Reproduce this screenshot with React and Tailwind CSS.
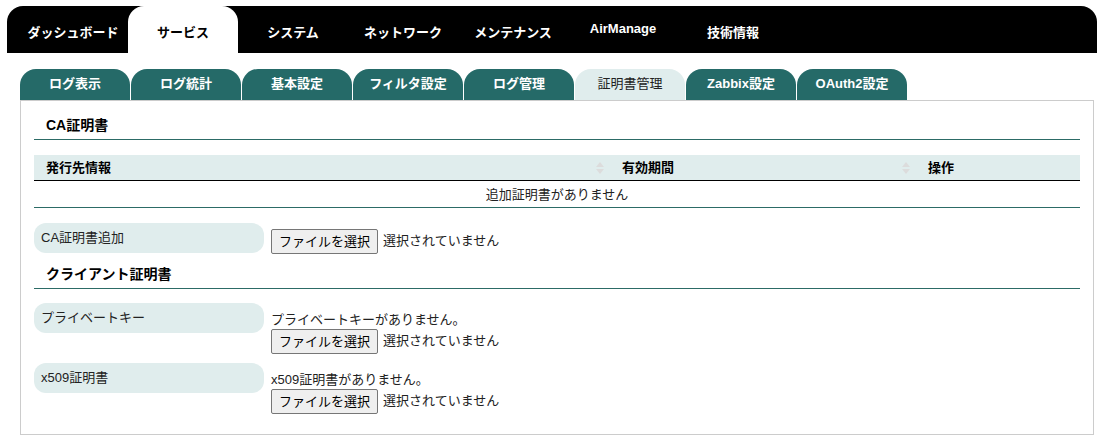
import React from 'react';

const NAV = ['ダッシュボード', 'サービス', 'システム', 'ネットワーク', 'メンテナンス', 'AirManage', '技術情報'];
const TABS = ['ログ表示', 'ログ統計', '基本設定', 'フィルタ設定', 'ログ管理', '証明書管理', 'Zabbix設定', 'OAuth2設定'];

const SortIcon = () => (
  <svg width="10" height="14" viewBox="0 0 10 14" className="shrink-0">
    <path d="M5 1 L9 6 H1 Z" fill="#dcdcdc" />
    <path d="M5 13 L9 8 H1 Z" fill="#dcdcdc" />
  </svg>
);

const FileInput = () => (
  <div className="flex items-center gap-[5px]">
    <button className="h-[25px] px-[7px] border border-[#767676] bg-[#efefef] rounded-[2px] text-[13px] text-black leading-none">
      ファイルを選択
    </button>
    <span className="text-[13px] text-[#222]">選択されていません</span>
  </div>
);

const Pill = ({ children }) => (
  <div className="w-[230px] h-[30px] shrink-0 rounded-[12px] bg-[#e0eded] flex items-center pl-[7px] text-[13px] text-[#222]">
    {children}
  </div>
);

const SectionHead = ({ children, className }) => (
  <div className={`border-b border-[#2c6b66] pl-[12px] pb-[5px] text-[14px] font-bold text-black leading-[18px] ${className}`}>
    {children}
  </div>
);

export default function App() {
  return (
    <div className="bg-white w-[1097px] h-[439px] overflow-hidden pt-[6px] [font-family:Liberation_Sans,Noto_Sans_CJK_JP,sans-serif]">
      <nav className="ml-[7px] h-[47px] bg-black rounded-t-[16px] flex pl-[11px]">
        {NAV.map((n, i) => (
          <div
            key={n}
            className={`w-[110px] h-full flex items-center justify-center text-[13px] font-bold ${
              i === 1 ? 'bg-white text-black rounded-t-[16px]' : 'text-white'
            } ${n === 'AirManage' ? 'pb-[1px]' : 'pt-[6px]'}`}
          >
            {n}
          </div>
        ))}
      </nav>

      <div className="mt-[16px] ml-[20px] flex gap-[1px]">
        {TABS.map((t, i) => (
          <div
            key={t}
            className={`w-[110px] h-[31px] rounded-t-[16px] flex items-center justify-center text-[13px] pb-[2px] ${
              i === 5 ? 'bg-[#e0eded] text-[#222]' : 'bg-[#256a68] text-white font-bold'
            }`}
          >
            {t}
          </div>
        ))}
      </div>

      <div className="ml-[20px] w-[1074px] h-[335px] border border-[#cccccc] px-[13px]">
        <SectionHead className="pt-[15px]">CA証明書</SectionHead>

        <table className="mt-[15px] w-full border-collapse text-[13px]">
          <thead>
            <tr className="bg-[#e0eded] h-[25px] border-b border-black">
              <th className="w-[576px] p-0 font-bold text-left">
                <div className="flex items-center justify-between pl-[12px] pr-[5px] pt-[1px]">
                  <span>発行先情報</span>
                  <SortIcon />
                </div>
              </th>
              <th className="w-[306px] p-0 font-bold text-left">
                <div className="flex items-center justify-between pl-[12px] pr-[5px] pt-[1px]">
                  <span>有効期間</span>
                  <SortIcon />
                </div>
              </th>
              <th className="p-0 font-bold text-left">
                <div className="pl-[12px] pt-[1px]">操作</div>
              </th>
            </tr>
          </thead>
          <tbody>
            <tr className="h-[27px] border-b border-[#2c6b66]">
              <td colSpan={3} className="text-center text-[#222] p-0 pt-[3px]">追加証明書がありません</td>
            </tr>
          </tbody>
        </table>

        <div className="mt-[15px] flex gap-[7px]">
          <Pill>CA証明書追加</Pill>
          <div className="pt-[6px]">
            <FileInput />
          </div>
        </div>

        <SectionHead className="pt-[11px]">クライアント証明書</SectionHead>

        <div className="mt-[14px] flex gap-[7px]">
          <Pill>プライベートキー</Pill>
          <div className="pt-[8px] flex flex-col">
            <span className="text-[13px] text-[#222] leading-[18px]">プライベートキーがありません。</span>
            <FileInput />
          </div>
        </div>

        <div className="mt-[9px] flex gap-[7px]">
          <Pill>x509証明書</Pill>
          <div className="pt-[8px] flex flex-col">
            <span className="text-[13px] text-[#222] leading-[18px]">x509証明書がありません。</span>
            <FileInput />
          </div>
        </div>
      </div>
    </div>
  );
}
